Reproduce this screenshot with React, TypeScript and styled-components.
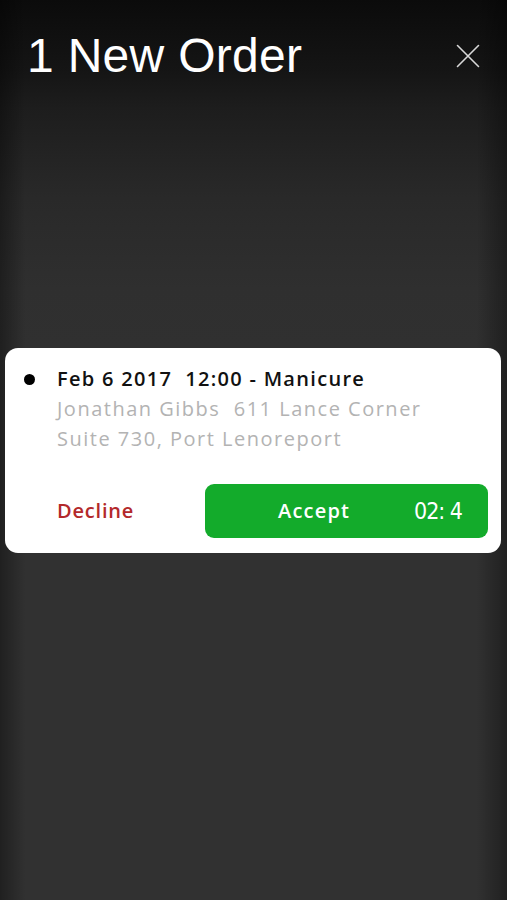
import React from 'react';
import styled, { createGlobalStyle } from 'styled-components';

const GlobalStyle = createGlobalStyle`
  html, body {
    margin: 0;
    padding: 0;
    background: #0b0b0b;
  }
  * {
    box-sizing: border-box;
  }
`;

const Screen = styled.div`
  width: 507px;
  height: 900px;
  display: flex;
  flex-direction: column;
  background:
    linear-gradient(90deg, rgba(0,0,0,0.35) 0%, rgba(0,0,0,0) 5%, rgba(0,0,0,0) 94%, rgba(0,0,0,0.35) 100%),
    linear-gradient(180deg, #0b0b0b 0%, #151515 8%, #1d1d1d 12%, #292929 22%, #2f2f2f 32%, #313131 45%, #313131 100%);
  font-family: 'Open Sans', 'Liberation Sans', sans-serif;
  overflow: hidden;
`;

const Header = styled.header`
  height: 100px;
  flex: none;
  display: flex;
  align-items: flex-start;
  justify-content: space-between;
  padding: 32px 26px 0 27px;
`;

const Title = styled.h1`
  margin: 0;
  font-family: 'Liberation Sans', Arial, sans-serif;
  font-weight: 400;
  font-size: 48px;
  line-height: 48px;
  letter-spacing: 0.3px;
  color: #ffffff;
`;

const CloseButton = styled.button`
  margin-top: 11px;
  width: 26px;
  height: 26px;
  padding: 0;
  border: none;
  background: transparent;
  display: flex;
  align-items: center;
  justify-content: center;
  cursor: pointer;
`;

const Body = styled.main`
  flex: 1;
  display: flex;
  align-items: center;
  justify-content: center;
  padding: 0 6px 0 5px;
`;

const Footer = styled.div`
  height: 100px;
  flex: none;
`;

const Card = styled.section`
  width: 100%;
  background: #ffffff;
  border-radius: 13px;
  padding: 16px 13px 15px 19px;
`;

const InfoRow = styled.div`
  display: flex;
  align-items: flex-start;
`;

const Bullet = styled.span`
  flex: none;
  width: 11px;
  height: 11px;
  border-radius: 50%;
  background: #000;
  margin: 10px 22px 0 0;
`;

const Info = styled.div`
  display: flex;
  flex-direction: column;
`;

const Heading = styled.div`
  font-size: 20px;
  font-weight: 600;
  line-height: 30px;
  letter-spacing: 1.3px;
  color: #111;
  white-space: pre;
`;

const Detail = styled.div`
  font-size: 20px;
  font-weight: 500;
  line-height: 30px;
  color: #b3b3b3;
  letter-spacing: 1.5px;
  white-space: pre;
`;

const Actions = styled.div`
  display: flex;
  align-items: center;
  margin-top: 30px;
`;

const DeclineButton = styled.button`
  width: 181px;
  flex: none;
  padding: 0 0 0 33px;
  border: none;
  background: transparent;
  text-align: left;
  font-family: inherit;
  font-size: 20px;
  font-weight: 600;
  letter-spacing: 0.8px;
  color: #b3292b;
  cursor: pointer;
`;

const AcceptButton = styled.button`
  flex: 1;
  height: 54px;
  border: none;
  border-radius: 9px;
  background: #13ab2b;
  display: flex;
  align-items: center;
  padding: 0 26px 0 73px;
  font-family: inherit;
  color: #ffffff;
  cursor: pointer;
`;

const AcceptLabel = styled.span`
  font-size: 20px;
  font-weight: 600;
  letter-spacing: 1.2px;
`;

const Timer = styled.span`
  margin-left: auto;
  font-family: 'DejaVu Sans Condensed', 'DejaVu Sans', sans-serif;
  font-stretch: condensed;
  font-size: 23px;
  letter-spacing: -1px;
  white-space: pre;
`;

const CloseIcon = () => (
  <svg width="24" height="24" viewBox="0 0 24 24">
    <path d="M1.5 1.5 L22.5 22.5 M22.5 1.5 L1.5 22.5" stroke="#d8d8d8" strokeWidth="1.6" strokeLinecap="round" />
  </svg>
);

export default function App() {
  return (
    <>
      <GlobalStyle />
      <Screen>
        <Header>
          <Title>1 New Order</Title>
          <CloseButton aria-label="Close">
            <CloseIcon />
          </CloseButton>
        </Header>
        <Body>
          <Card>
            <InfoRow>
              <Bullet />
              <Info>
                <Heading>{'Feb 6 2017  12:00 - Manicure'}</Heading>
                <Detail>{'Jonathan Gibbs  611 Lance Corner'}</Detail>
                <Detail>Suite 730, Port Lenoreport</Detail>
              </Info>
            </InfoRow>
            <Actions>
              <DeclineButton>Decline</DeclineButton>
              <AcceptButton>
                <AcceptLabel>Accept</AcceptLabel>
                <Timer>02: 4</Timer>
              </AcceptButton>
            </Actions>
          </Card>
        </Body>
        <Footer />
      </Screen>
    </>
  );
}
